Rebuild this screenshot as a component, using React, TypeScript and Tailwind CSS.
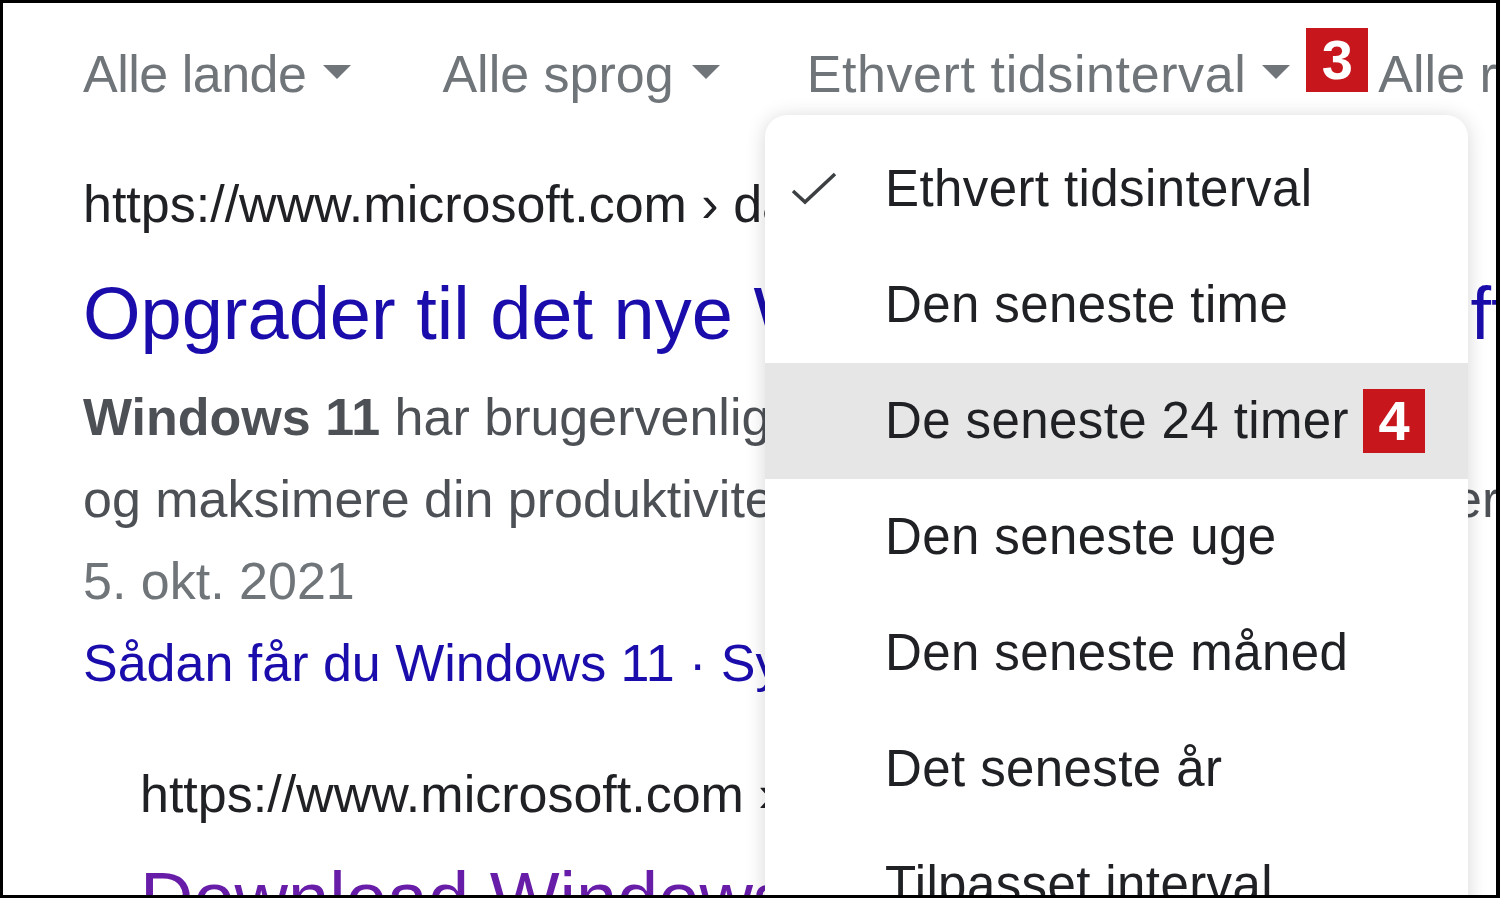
import React from "react";

const font = { fontFamily: '"Liberation Sans", Arial, sans-serif' };

const Caret = () => (
  <svg width="28" height="14" viewBox="0 0 28 14" className="mt-[37px] shrink-0">
    <path d="M0 0 L28 0 L14 14 Z" fill="#70757a" />
  </svg>
);

const Badge = ({ n }: { n: string }) => (
  <div className="w-[62px] h-[64px] bg-[#c8161d] text-white font-bold text-[56px] leading-[64px] text-center shrink-0">
    {n}
  </div>
);

const FilterRow = () => (
  <div className="flex items-start pl-[80px] mt-[25px] whitespace-nowrap text-[52px] leading-[82px] text-[#70757a]">
    <span className="mt-[5px] tracking-[-0.5px]">Alle lande</span>
    <div className="ml-[17px]"><Caret /></div>
    <span className="mt-[5px] ml-[91px]">Alle sprog</span>
    <div className="ml-[18px]"><Caret /></div>
    <span className="mt-[5px] ml-[87px] tracking-[0.6px]">Ethvert tidsinterval</span>
    <div className="ml-[16px]"><Caret /></div>
    <div className="ml-[16px]"><Badge n="3" /></div>
    <span className="mt-[5px] ml-[10px]">Alle resultater</span>
  </div>
);

const Results = () => (
  <div className="pl-[80px] mt-[48px] whitespace-nowrap">
    <div className="text-[52px] leading-[82px] text-[#202124]">
      https://www.microsoft.com › da-dk › windows › windows-11
    </div>
    <div className="text-[74px] leading-[96px] text-[#1a0dab] mt-[21px]">
      Opgrader til det nye Windows 11 | Microsoft
    </div>
    <div className="text-[52px] leading-[82px] text-[#4d5156] mt-[14px]">
      <div>
        <b>Windows 11</b> har brugervenlige værktøjer til at hjælpe dig
      </div>
      <div>og maksimere din produktivitet, mens du arbejder og opdager nyo</div>
      <div className="text-[#70757a]">5. okt. 2021</div>
      <div className="text-[#1a0dab]">Sådan får du Windows 11 · Systemkrav · Windows 11 pro</div>
    </div>
    <div className="pl-[57px] mt-[49px]">
      <div className="text-[52px] leading-[82px] text-[#202124]">
        https://www.microsoft.com › da-dk › software-download
      </div>
      <div className="text-[74px] leading-[96px] text-[#681da8] mt-[16px]">
        Download Windows 11
      </div>
    </div>
  </div>
);

const items = [
  "Ethvert tidsinterval",
  "Den seneste time",
  "De seneste 24 timer",
  "Den seneste uge",
  "Den seneste måned",
  "Det seneste år",
  "Tilpasset interval",
];

const Menu = () => (
  <div className="absolute left-[762px] top-[112px] w-[703px] bg-white rounded-[22px] shadow-[0_2px_20px_rgba(0,0,0,0.16)] py-[16px]">
    {items.map((t, i) => (
      <div
        key={t}
        className={
          "relative flex items-center h-[116px] pl-[120px] text-[51px] text-[#202124] whitespace-nowrap " +
          (i === 2 ? "bg-[#e6e6e6]" : "")
        }
      >
        {i === 0 && (
          <svg width="48" height="40" viewBox="0 0 48 40" className="absolute left-[25px] top-[38px]">
            <path d="M3 22 L15 33 L45 5" fill="none" stroke="#3c4043" strokeWidth="3.5" />
          </svg>
        )}
        <span className="tracking-[0.4px]">{t}</span>
        {i === 2 && (
          <div className="ml-[14px]">
            <Badge n="4" />
          </div>
        )}
      </div>
    ))}
  </div>
);

export default function App() {
  return (
    <div
      style={font}
      className="relative w-[1500px] h-[898px] overflow-hidden bg-white border-[3px] border-r-[4px] border-black"
    >
      <FilterRow />
      <Results />
      <Menu />
    </div>
  );
}
